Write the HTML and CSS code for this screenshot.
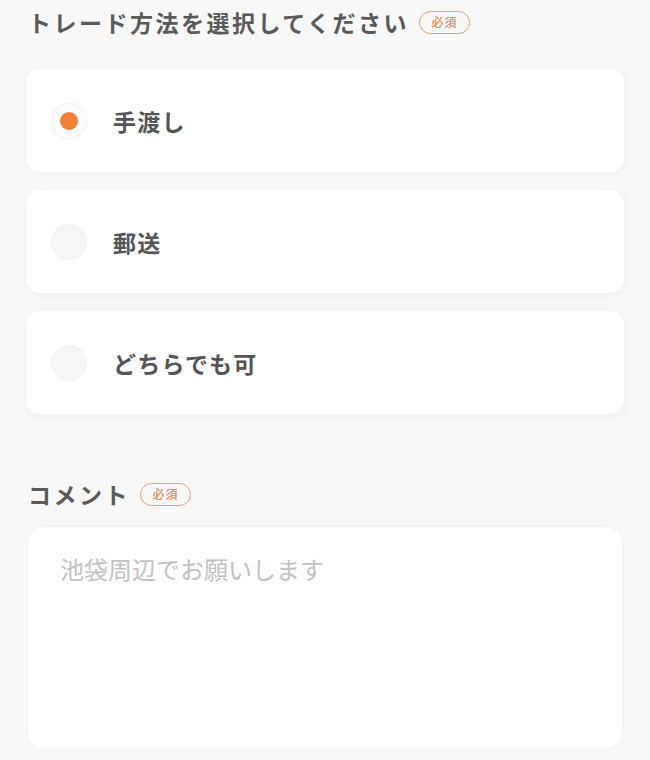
FILE: index.html
```html
<!DOCTYPE html>
<html lang="ja">
<head>
<meta charset="utf-8">
<link rel="stylesheet" href="styles.css">
</head>
<body>
<main class="form">
  <section class="group">
    <div class="label-row">
      <h2 class="label">トレード方法を選択してください</h2>
      <span class="badge">必須</span>
    </div>
    <div class="options">
      <label class="option">
        <span class="radio checked"><span class="dot"></span></span>
        <span class="option-text">手渡し</span>
      </label>
      <label class="option">
        <span class="radio"></span>
        <span class="option-text">郵送</span>
      </label>
      <label class="option">
        <span class="radio"></span>
        <span class="option-text">どちらでも可</span>
      </label>
    </div>
  </section>
  <section class="group comment-group">
    <div class="label-row">
      <h2 class="label">コメント</h2>
      <span class="badge">必須</span>
    </div>
    <div class="textarea">
      <span class="placeholder">池袋周辺でお願いします</span>
    </div>
  </section>
</main>
</body>
</html>
```

FILE: styles.css
```css
* { box-sizing: border-box; }
html, body {
  margin: 0;
  padding: 0;
  background: #f8f8f8;
  font-family: "Noto Sans CJK JP", "Noto Sans", sans-serif;
  color: #4d4d4d;
}
.form {
  padding: 8px 26px 0 26px;
  display: flex;
  flex-direction: column;
}
.label-row {
  display: flex;
  align-items: center;
  gap: 10px;
  padding-left: 2px;
  height: 28px;
}
.label {
  margin: 0;
  font-size: 23px;
  font-weight: 700;
  letter-spacing: 2.5px;
  line-height: 28px;
  color: #5a5a5a;
}
.badge {
  display: inline-flex;
  align-items: center;
  justify-content: center;
  width: 51px;
  height: 23px;
  border: 1.5px solid #eaa074;
  border-radius: 12px;
  color: #e8894e;
  font-size: 12px;
  font-weight: 500;
  line-height: 1;
  letter-spacing: 1px;
}
.options {
  margin-top: 33px;
  display: flex;
  flex-direction: column;
  gap: 18px;
}
.option {
  display: flex;
  align-items: center;
  height: 103px;
  padding-left: 26px;
  background: #fff;
  border-radius: 14px;
  box-shadow: 0 2px 8px rgba(0, 0, 0, 0.04);
}
.radio {
  width: 34px;
  height: 34px;
  border-radius: 50%;
  background: #f6f6f6;
  box-shadow: 0 0 0 1px #f2f2f2;
  display: flex;
  align-items: center;
  justify-content: center;
  flex-shrink: 0;
}
.radio.checked {
  background: #fbfbfb;
  box-shadow: 0 0 0 1px #f1f3f6, 0 0 4px rgba(230, 235, 245, 0.9);
}
.dot {
  width: 18px;
  height: 18px;
  border-radius: 50%;
  background: #f57f32;
}
.option-text {
  margin-left: 27px;
  font-size: 23px;
  font-weight: 700;
  letter-spacing: 1.2px;
  color: #555;
}
.comment-group {
  margin-top: 66px;
}
.textarea {
  margin: 19px 2px 0 2px;
  height: 221px;
  background: #fff;
  border-radius: 16px;
  box-shadow: 0 0 0 1px #f3f3f3;
  padding: 27px 32px;
}
.placeholder {
  font-size: 24px;
  line-height: 30px;
  color: #c2c2c2;
}
```
